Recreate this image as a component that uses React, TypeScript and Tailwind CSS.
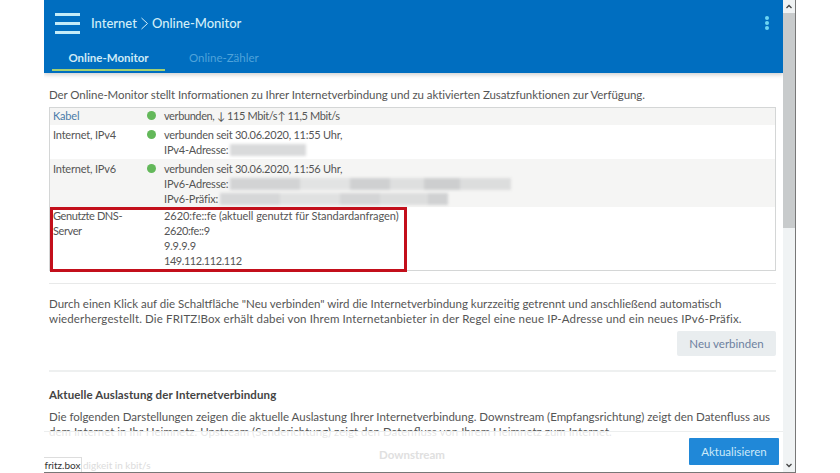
const font = { fontFamily: '"Lato", "Liberation Sans", sans-serif' };

const Dot = () => (
  <span className="mt-[3px] block h-[9px] w-[9px] rounded-full bg-[#63b85a]" />
);

// the masked addresses are smudged pixel blocks
const Smudge = ({ blocks }: { blocks: [number, string][] }) => (
  <span className="ml-[2px] inline-flex h-[12px] align-[-2px] blur-[1.5px]">
    {blocks.map(([w, c], i) => (
      <span key={i} className="block h-full" style={{ width: w, backgroundColor: c }} />
    ))}
  </span>
);

const Row = ({
  label,
  dot,
  alt,
  blue,
  className,
  children,
}: {
  label: React.ReactNode;
  dot?: boolean;
  alt?: boolean;
  blue?: boolean;
  className: string;
  children: React.ReactNode;
}) => (
  <div className={`flex pl-[3px] ${className} ${alt ? "bg-[#f5f5f4]" : "bg-white"}`}>
    <div className={`w-[92px] shrink-0 ${blue ? "text-[#4a7ba8]" : ""}`}>{label}</div>
    <div className="flex w-[19px] shrink-0 justify-start pl-[2px]">{dot && <Dot />}</div>
    <div className="min-w-0 flex-1">{children}</div>
  </div>
);

export default function App() {
  return (
    <div
      className="relative flex h-[473px] w-[840px] overflow-hidden bg-white pl-[44px] pr-[44px] text-[11.5px] leading-[15px] text-[#555]"
      style={font}
    >
      <div className="relative flex h-[472px] flex-1 flex-col overflow-hidden">
        <header className="h-[73px] shrink-0 bg-[#006ec0] shadow-[0_2px_4px_rgba(0,0,0,0.18)]">
          <div className="flex h-[46px] items-center pl-[11px] pr-[14px]">
            <div className="flex w-[25px] flex-col gap-[6px]">
              <span className="block h-[3px] bg-[#c4ecf8]" />
              <span className="block h-[3px] bg-[#c4ecf8]" />
              <span className="block h-[3px] bg-[#c4ecf8]" />
            </div>
            <div className="ml-[11px] flex items-center text-[13px] font-medium text-[#d4eef8]">
              Internet
              <svg width="9" height="13" viewBox="0 0 9 13" className="mx-[3px]">
                <path d="M1.5 1l6 5.5-6 5.5" fill="none" stroke="#d4eef8" strokeWidth="1" />
              </svg>
              Online-Monitor
            </div>
            <div className="ml-auto flex flex-col gap-[1px]">
              <span className="block h-[4px] w-[4px] rounded-full bg-[#6dd5f2]" />
              <span className="block h-[4px] w-[4px] rounded-full bg-[#6dd5f2]" />
              <span className="block h-[4px] w-[4px] rounded-full bg-[#6dd5f2]" />
            </div>
          </div>
          <div className="flex pl-[8px] text-[11.5px]">
            <div className="flex h-[25px] w-[113px] items-start justify-center border-b-[2px] border-[#a3cf72] pt-[4px] font-bold text-[#cfeaf6]">
              Online-Monitor
            </div>
            <div className="ml-[24px] pt-[4px] text-[#4fa3da]">Online-Zähler</div>
          </div>
        </header>

        <main className="flex-1 pl-[5px] pr-[7px]">
          <p className="mt-[14px] whitespace-nowrap tracking-[-0.07px]">
            Der Online-Monitor stellt Informationen zu Ihrer Internetverbindung und zu aktivierten
            Zusatzfunktionen zur Verfügung.
          </p>

          <div className="relative mt-[5px] border border-[#d4d6d6] text-[11px] tracking-[-0.2px]">
            <Row label="Kabel" dot alt blue className="h-[17px]">
              <span className="tracking-[-0.4px]">verbunden, ↓ 115 Mbit/s↑ 11,5 Mbit/s</span>
            </Row>
            <Row label="Internet, IPv4" dot className="h-[34px] pt-[2px]">
              <div className="tracking-[-0.25px]">verbunden seit 30.06.2020, 11:55 Uhr,</div>
              <div>
                IPv4-Adresse:
                <Smudge blocks={[[76, "#d9dadb"]]} />
              </div>
            </Row>
            <Row label="Internet, IPv6" dot alt className="h-[48px] pt-[2px]">
              <div className="tracking-[-0.25px]">verbunden seit 30.06.2020, 11:56 Uhr,</div>
              <div>
                IPv6-Adresse:
                <Smudge
                  blocks={[
                    [70, "#d2d3d4"],
                    [50, "#e2e3e3"],
                    [40, "#cfd0d1"],
                    [34, "#dedfdf"],
                    [36, "#cdcecf"],
                    [51, "#dcdddd"],
                  ]}
                />
              </div>
              <div>
                IPv6-Präfix:
                <Smudge
                  blocks={[
                    [60, "#d6d7d8"],
                    [60, "#e0e1e1"],
                    [40, "#d4d5d6"],
                    [48, "#dcdddd"],
                    [20, "#d0d1d2"],
                  ]}
                />
              </div>
            </Row>
            <Row
              label={
                <span className="tracking-[-0.4px]">
                  Genutzte DNS-
                  <br />
                  Server
                </span>
              }
              className="h-[63px] pt-[1px]"
            >
              <div className="tracking-[-0.05px]">2620:fe::fe (aktuell genutzt für Standardanfragen)</div>
              <div className="tracking-[-0.4px]">2620:fe::9</div>
              <div>9.9.9.9</div>
              <div className="tracking-[-0.45px]">149.112.112.112</div>
            </Row>
            <div className="absolute left-[0px] top-[99px] h-[65px] w-[357px] border-[3px] border-[#c30f1b]" />
          </div>

          <hr className="mt-[12px] border-t border-[#e8e9e9]" />
          <p className="mt-[12px]">
            Durch einen Klick auf die Schaltfläche "Neu verbinden" wird die Internetverbindung kurzzeitig
            getrennt und anschließend automatisch
            <br />
            <span className="tracking-[0.14px]">
              wiederhergestellt. Die FRITZ!Box erhält dabei von Ihrem Internetanbieter in der Regel eine neue
              IP-Adresse und ein neues IPv6-Präfix.
            </span>
          </p>
          <div className="mt-[5px] flex justify-end">
            <button className="h-[25px] w-[99px] rounded-[2px] bg-[#e9edef] text-[#6d81a0]">
              Neu verbinden
            </button>
          </div>
          <hr className="mt-[14px] border-t-[2px] border-[#eef0f0]" />
          <h2 className="mt-[15px] font-bold tracking-[0.1px] text-[#444]">
            Aktuelle Auslastung der Internetverbindung
          </h2>
          <p className="mt-[7px]">
            Die folgenden Darstellungen zeigen die aktuelle Auslastung Ihrer Internetverbindung. Downstream
            (Empfangsrichtung) zeigt den Datenfluss aus
            <br />
            dem Internet in Ihr Heimnetz. Upstream (Senderichtung) zeigt den Datenfluss von Ihrem Heimnetz
            zum Internet.
          </p>
        </main>

        {/* sticky footer over the scrolled content */}
        <div className="absolute bottom-0 left-0 right-0 h-[41px] border-t border-[#eceeee] bg-white/85">
          <div className="absolute left-0 right-0 top-[15px] pr-[3px] text-center font-bold text-[#e0e0e0]">
            Downstream
          </div>
          <div className="absolute left-[39px] top-[26px] whitespace-nowrap text-[10px] text-[#dcdcdc]">
            digkeit in kbit/s
          </div>
          <button className="absolute right-[4px] top-[6px] h-[27px] w-[90px] rounded-[1px] bg-[#2088d8] text-[#cdeaf8]">
            Aktualisieren
          </button>
          <div className="absolute bottom-0 left-0 flex h-[15px] w-[38px] items-center justify-center border-r border-t border-[#ddd] bg-white text-[10px] text-[#333]">
            fritz.box
          </div>
        </div>
      </div>

      <div className="flex h-[472px] w-[13px] shrink-0 flex-col items-center border-r border-[#777] bg-[#f0f3f4]">
        <svg width="8" height="13" viewBox="0 0 8 13">
          <path d="M1.5 8l2.5-2.5L6.5 8" fill="none" stroke="#444" strokeWidth="1.3" />
        </svg>
        <div className="h-[215px] w-full bg-[#c8cbcc]" />
        <svg width="8" height="13" viewBox="0 0 8 13" className="mt-auto">
          <path d="M1.5 5l2.5 2.5L6.5 5" fill="none" stroke="#444" strokeWidth="1.3" />
        </svg>
      </div>

      <div className="absolute bottom-0 left-[44px] h-[1px] w-[752px] bg-[#777]" />
    </div>
  );
}
